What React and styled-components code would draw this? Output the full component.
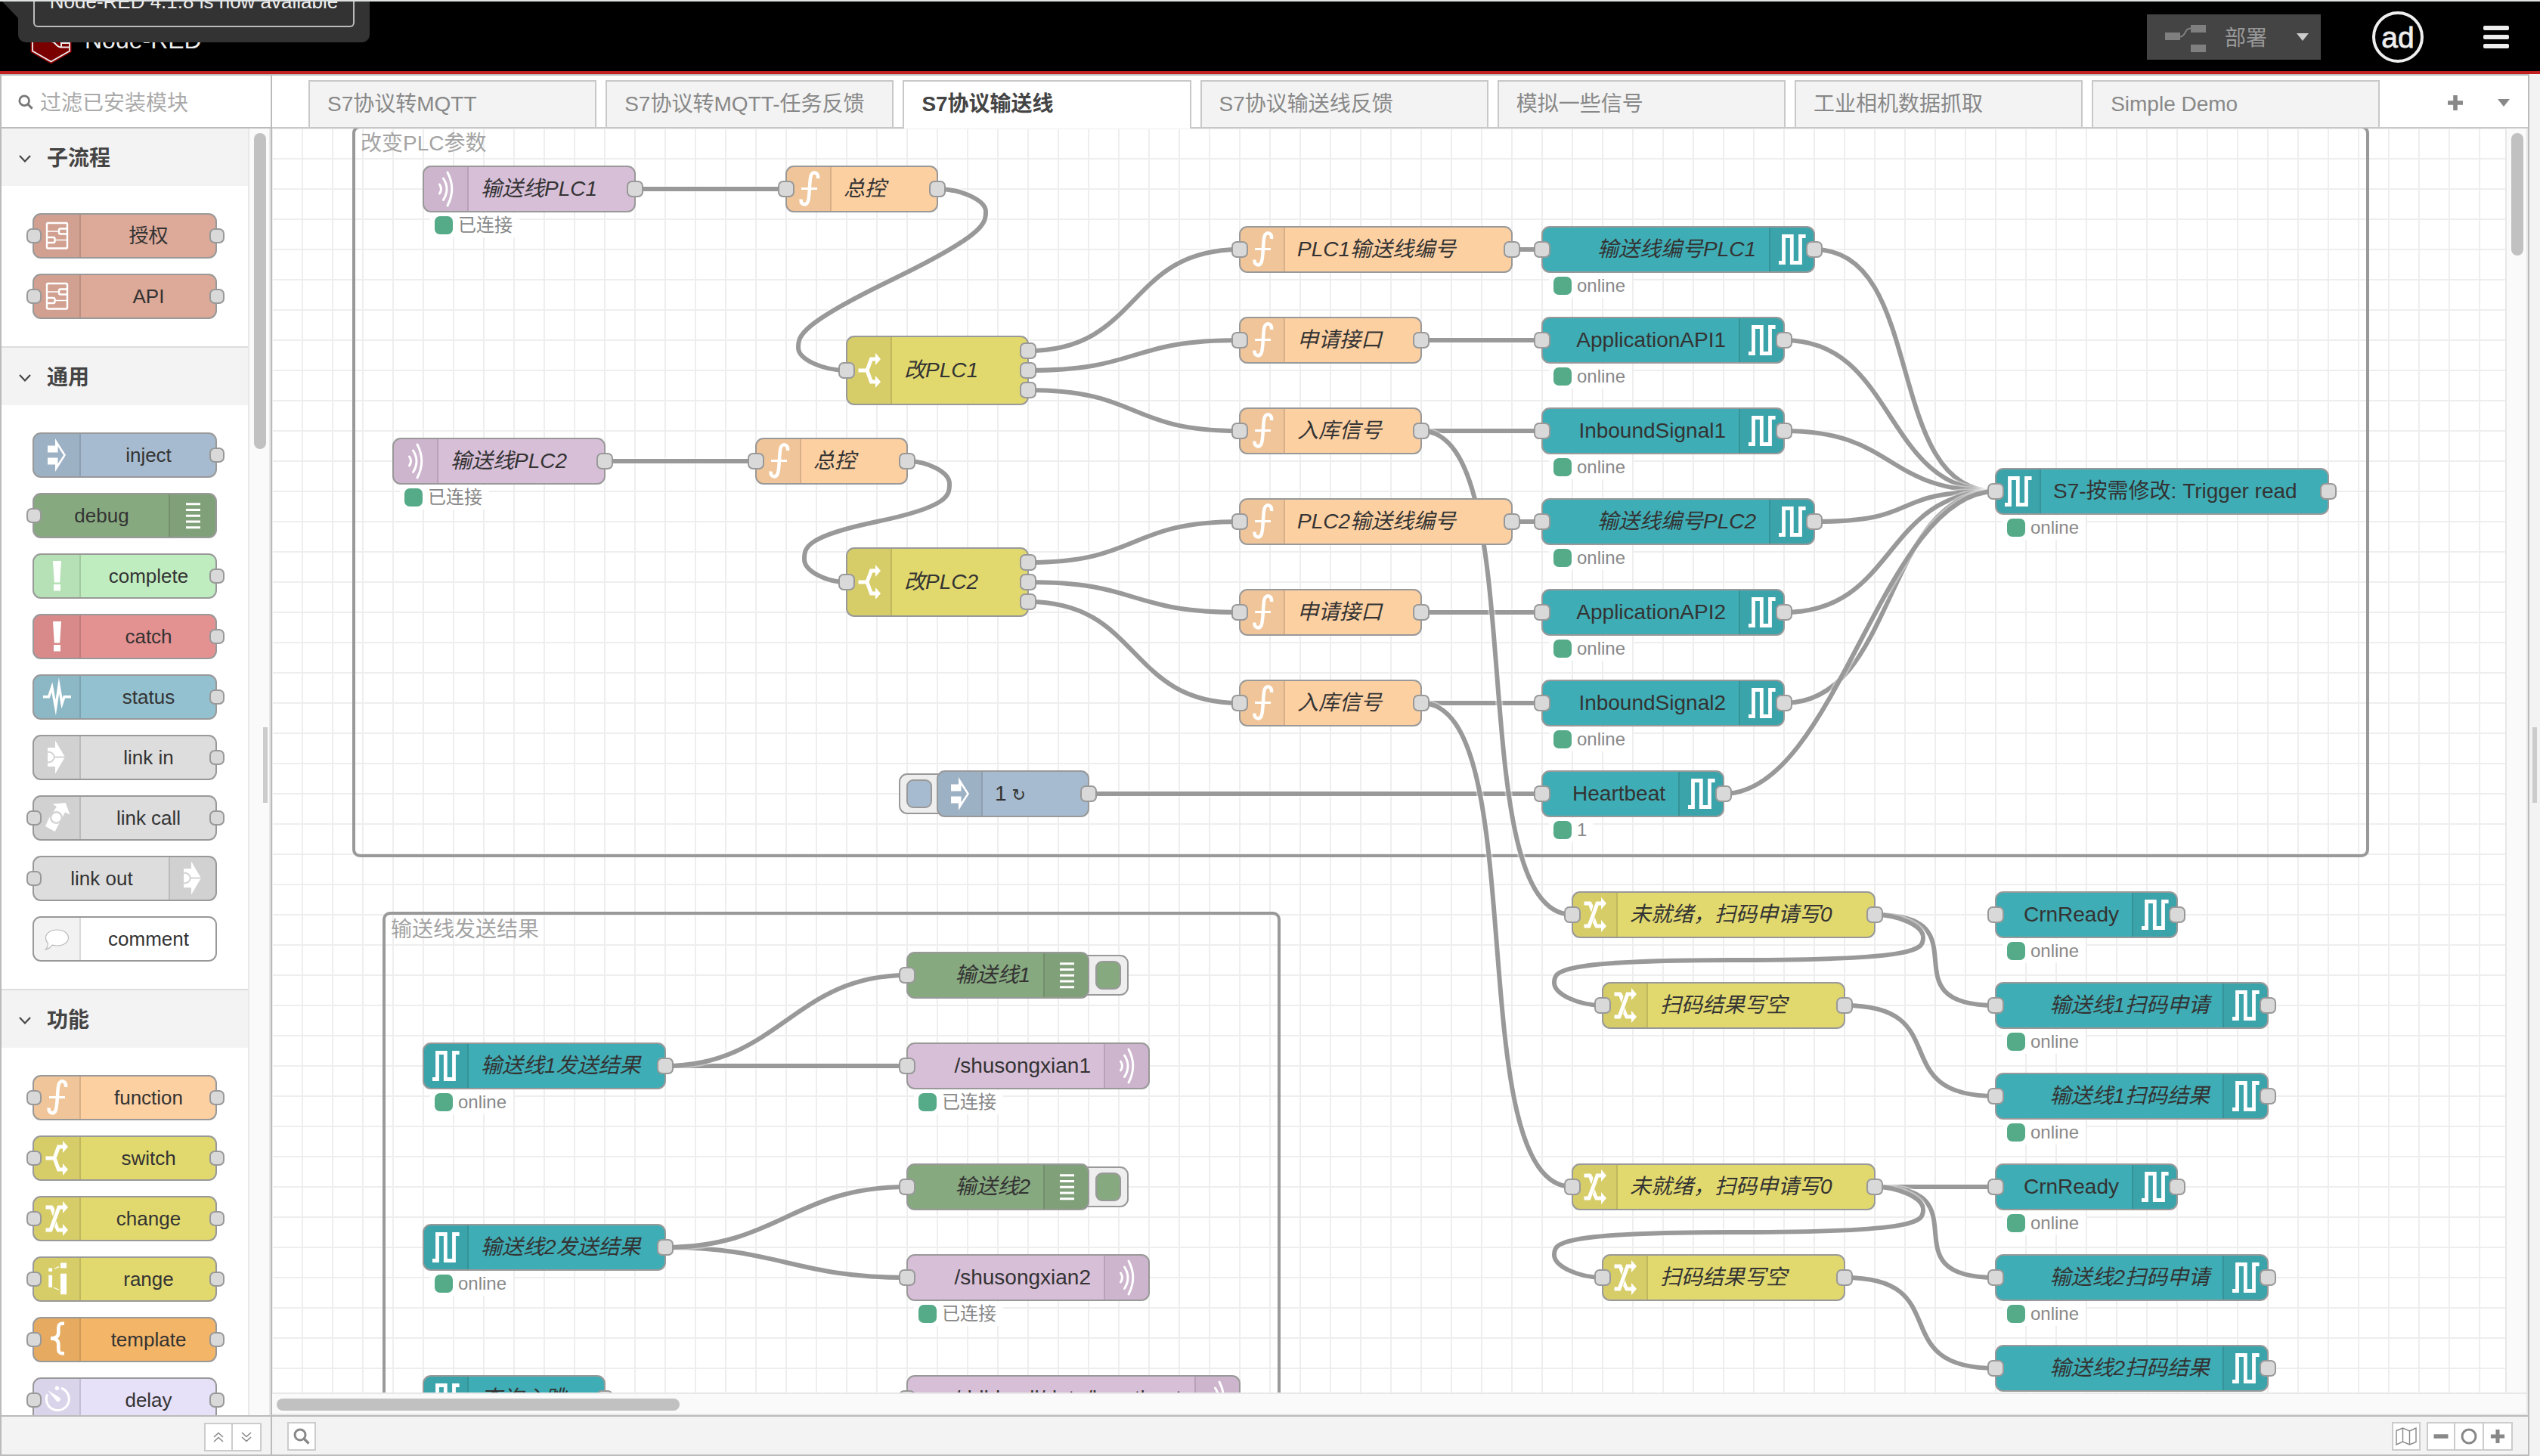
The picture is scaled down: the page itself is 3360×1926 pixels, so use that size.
import React from 'react';
import styled, { createGlobalStyle, css } from 'styled-components';

const GlobalStyle = createGlobalStyle`
  *, *::before, *::after { box-sizing: border-box; }
  html, body { margin: 0; padding: 0; background: #f3f3f3; overflow: hidden; }
  body {
    font-family: "Liberation Sans", "Noto Sans CJK SC", "DejaVu Sans", sans-serif;
    font-size: 28px;
    color: #333;
  }
`;

/* ---------- icons, all on a 40x60 canvas ---------- */

const ARROWHEADS = 'M28 7 L35 15 L28 23 Z M28 37 L35 45 L28 53 Z';

const ICONS = {
  mqtt: (
    <g fill="none" stroke="#fff" strokeWidth="3" strokeLinecap="round">
      <path d="M22 8 Q33.5 30 22 52" />
      <path d="M16.5 16 Q25.5 30 16.5 44.5" />
      <path d="M11.5 24 Q15.5 30 11.5 36" />
    </g>
  ),
  fn: (
    <g fill="none" stroke="#fff" strokeWidth="4.5">
      <path d="M32 16 C33 7.5 25 6 22.8 12 C20.5 18 21.5 40 18.6 47 C16 52.5 9 51 9.6 43.5" />
      <path d="M10 29.5 H31" strokeWidth="3" />
    </g>
  ),
  switch: (
    <g>
      <path d="M5.5 30 H17 M28 15 H22.5 L17 30 L22.5 45 H28" fill="none" stroke="#fff" strokeWidth="5" />
      <path d={ARROWHEADS} fill="#fff" />
    </g>
  ),
  change: (
    <g fill="#fff">
      <path d="M5.5 45 H12 L23 15 H28" fill="none" stroke="#fff" strokeWidth="5" />
      <path d="M5.5 12.5 H14.5 L17.5 18 L15 27 L11.5 17.5 H5.5 Z" />
      <path d="M19.5 33 L23 42.5 H28 V47.5 H20.5 L17 41 Z" />
      <path d={ARROWHEADS} />
    </g>
  ),
  range: (
    <g fill="#fff">
      <path d="M9.3 15.5 h4.8 v4.5 h-4.8z M9.3 24.7 h4.8 v16.3 h-4.8z M25 8.6 h8 v6.8 h-8z M25 22.7 h8 v27.5 h-8z" />
      <path d="M17 16.2 L23 13.6 M16 41.3 L23 44.2" stroke="#fff" strokeWidth="1.2" />
    </g>
  ),
  template: (
    <path
      d="M30 8.8 H27.5 C23 8.8 22.3 11 22.3 15 V21 C22.3 26 19 28.5 12 28.5 C19 28.5 22.3 31 22.3 36 V42 C22.3 46 23 48.2 27.5 48.2 H30"
      fill="none"
      stroke="#fff"
      strokeWidth="4.6"
    />
  ),
  delay: (
    <g>
      <path d="M26 14.3 A15 15 0 1 1 7.6 22.5" fill="none" stroke="#fff" strokeWidth="3" />
      <circle cx="20.5" cy="14.3" r="2.7" fill="#fff" />
      <path d="M8 17 L23.5 26.5 A2.6 2.6 0 0 1 20 31.5 Z" fill="#fff" />
    </g>
  ),
  inject: (
    <path
      fill="#fff"
      d="M18 8 L32 30 L18 52 V42.5 H8 V33.5 H21.5 V41.5 L29 30 L21.5 18.5 V26.5 H8 V17.5 H18 Z"
    />
  ),
  debug: (
    <path d="M11 14.8 H30 M11 22.4 H30 M11 30.2 H30 M11 38 H30 M11 45.8 H30" stroke="#fff" strokeWidth="3" fill="none" />
  ),
  bang: <path d="M15 10 H26 L24.2 38.5 H16.8 Z M16 41 H25 V49.5 H16 Z" fill="#fff" />,
  status: (
    <path
      d="M2 29.7 H9.5 L13.8 17 L18.7 44 L23 15 L27 38.5 L30 29.7 H39"
      fill="none"
      stroke="#fff"
      strokeWidth="3.4"
      strokeMiterlimit="10"
    />
  ),
  link: (
    <g>
      <path d="M8 17 H18 V7.5 L31 29.5 L18 51.5 V42 H8 Z" fill="#fff" />
      <path d="M8 22.5 C13 22.5 16 25 17 29.5 C16 34 13 36.5 8 36.5 M17 29.5 H31" fill="none" stroke="#d3d3d3" strokeWidth="2" />
    </g>
  ),
  linkCall: (
    <g>
      <path d="M14.5 11.5 L31.7 10 L37.5 25.5 L31 22.5 L17.7 48 L5 41 L10 30 L20 15 Z" fill="#fff" />
      <circle cx="19.5" cy="29.5" r="7.3" fill="#fff" stroke="#d3d3d3" strokeWidth="2.4" />
    </g>
  ),
  comment: (
    <path
      d="M20.5 18 C29 18 35.5 22.5 35.5 28.5 C35.5 34.5 29 39 20.5 39 C18 39 16 38.7 14 38.2 C12 41 9 43.5 5.3 44.2 C7.5 42 8.5 39 8.5 35.8 C6.5 33.8 5.5 31.3 5.5 28.5 C5.5 22.5 12 18 20.5 18 Z"
      fill="#fff"
      stroke="#bbb"
      strokeWidth="1.2"
    />
  ),
  subflow: (
    <g fill="none" stroke="#fff" strokeWidth="2.4">
      <rect x="7" y="13" width="27" height="33.5" rx="1.5" />
      <path d="M34 20.5 H25 a2 2 0 0 0 -2 2 v3 a2 2 0 0 0 2 2 H34 M7 32 H15.5 a2 2 0 0 1 2 2 v3 a2 2 0 0 1 -2 2 H7" />
      <path d="M7 24 H23 M17.5 35.5 H34" strokeWidth="1.6" />
    </g>
  ),
  s7: (
    <path d="M2 47.5 H8.5 V12.5 H19.3 V47.5 H30.5 V12.5 H37.6" fill="none" stroke="#fff" strokeWidth="4.8" />
  ),
};

const IconSvg = styled.svg`
  display: block;
  width: 40px;
  height: 60px;
  flex: none;
`;

const Icon = ({ name }) => <IconSvg viewBox="0 0 40 60">{ICONS[name]}</IconSvg>;

/* ---------- node building blocks ---------- */

const COLORS = {
  mqtt: '#d8bfd8',
  fn: '#fdd0a2',
  yellow: '#e2d96e',
  teal: '#3fadb5',
  inject: '#a6bbcf',
  debug: '#87a980',
  link: '#dddddd',
  subflow: '#dda998',
};

const NodeBody = styled.div`
  display: flex;
  flex-direction: ${(p) => (p.$right ? 'row-reverse' : 'row')};
  height: 100%;
  border: 2px solid #999;
  border-radius: 11px;
  background: ${(p) => p.$color};
  overflow: hidden;
`;

const IconPane = styled.div`
  display: flex;
  align-items: center;
  justify-content: center;
  flex: none;
  width: ${(p) => p.$width || 59}px;
  background: rgba(0, 0, 0, 0.05);
  ${(p) => (p.$right ? 'border-left' : 'border-right')}: 2px solid rgba(0, 0, 0, 0.1);
`;

const Port = styled.span`
  position: absolute;
  top: ${(p) => p.$y - 11}px;
  ${(p) => (p.$side === 'in' ? 'left: -10px;' : 'right: -10px;')}
  width: 22px;
  height: 22px;
  border: 2px solid #999;
  border-radius: 7px;
  background: #d9d9d9;
`;

const PalettePort = styled(Port)`
  top: 20px;
  ${(p) => (p.$side === 'in' ? 'left: -8px;' : 'right: -10px;')}
  width: 20px;
  height: 20px;
`;

/* ---------- header ---------- */

const Header = styled.header`
  display: flex;
  align-items: center;
  justify-content: space-between;
  height: 98px;
  padding: 2px 41px 0 40px;
  background: #000;
  border-top: 2px solid #dfe3e3;
  border-bottom: 4px solid #c02020;
`;

const Brand = styled.div`
  display: flex;
  align-items: center;
  gap: 17px;
  padding-top: 7px;
  color: #eee;
  font-size: 32px;
  line-height: 40px;
`;

const LogoSvg = styled.svg`
  width: 55px;
  height: 64px;
`;

const HeaderTools = styled.div`
  display: flex;
  align-items: center;
  height: 100%;
`;

const Deploy = styled.button`
  display: flex;
  align-items: center;
  width: 230px;
  height: 60px;
  margin: 0;
  padding: 0 16px 0 24px;
  border: 0;
  background: #444;
  color: #999;
  font: inherit;
`;

const DeployIcon = styled.svg`
  width: 54px;
  height: 36px;
  margin: 3px 25px 0 0;
`;

const Caret = styled.span`
  width: 0;
  height: 0;
  border: 8px solid transparent;
  border-top: 10px solid ${(p) => p.$color};
  border-bottom: 0;
`;

const DeployLabel = styled.span`
  flex: 1;
  padding-top: 3px;
  text-align: left;
  line-height: 40px;
`;

const Avatar = styled.div`
  display: flex;
  align-items: center;
  justify-content: center;
  width: 68px;
  height: 68px;
  margin: 0 79px 0 68px;
  padding-top: 2px;
  border: 4px solid #eee;
  border-radius: 50%;
  color: #eee;
  font-size: 39px;
  line-height: 56px;
  -webkit-text-stroke: 0.8px #eee;
`;

const Burger = styled.div`
  display: flex;
  flex-direction: column;
  gap: 6px;
  width: 34px;

  span {
    height: 6px;
    border-radius: 2px;
    background: #eee;
  }
`;

/* hangs over the header from above the window edge */
const Notice = styled.div`
  position: absolute;
  top: 2px;
  left: 24px;
  width: 465px;
  height: 54px;
  padding: 0 20px 20px;
  border-radius: 0 0 10px 10px;
  background: #333;
`;

const NoticeArrow = styled.svg`
  position: absolute;
  top: 2px;
  left: 0;
  width: 24px;
  height: 24px;
`;

const NoticeBox = styled.div`
  display: flex;
  justify-content: center;
  align-items: flex-end;
  height: 34px;
  padding-bottom: 17px;
  border: 2px solid #bbb;
  border-top: 0;
  border-radius: 0 0 6px 6px;
  overflow: hidden;
  color: #eee;
  font-size: 26px;
  line-height: 30px;
  white-space: nowrap;
`;

/* ---------- page frame ---------- */

const Page = styled.div`
  width: 3360px;
  height: 1926px;
  display: flex;
  flex-direction: column;
  background: #f3f3f3;
`;

const Main = styled.div`
  display: flex;
  flex: 1;
  min-height: 0;
`;

const Panel = styled.section`
  display: flex;
  flex-direction: column;
  border: 2px solid #bbb;
  background: #fff;
`;

const Palette = styled(Panel)`
  position: relative;
  width: 360px;
`;

const Workspace = styled(Panel)`
  width: 2986px;
  border-left: 0;
`;

const Sidebar = styled.aside`
  position: relative;
  flex: 1;
  background: #f3f3f3;
`;

const DragHandle = styled.i`
  position: absolute;
  top: ${(p) => p.$top}px;
  left: ${(p) => p.$left}px;
  width: 6px;
  height: 100px;
  background: #ccc;
`;

/* ---------- palette ---------- */

const Search = styled.div`
  display: flex;
  align-items: center;
  gap: 9px;
  height: 70px;
  padding: 2px 22px 0;
  border-bottom: 2px solid #bbb;
  color: #aaa;
  line-height: 40px;
`;

const SearchHint = styled.span`
  padding-top: 3px;
`;

const PaletteBody = styled.div`
  display: flex;
  flex: 1;
  min-height: 0;
`;

const Categories = styled.div`
  width: 326px;
  overflow: hidden;
`;

const PaletteScroll = styled.div`
  width: 30px;
  padding: 6px 4px 0 6px;
  border: solid #e8e8e8;
  border-width: 0 2px;
  background: #fafafa;
`;

const Thumb = styled.div`
  width: ${(p) => p.$w}px;
  height: ${(p) => p.$h}px;
  border-radius: 8px;
  background: #c1c1c1;
`;

const Category = styled.div`
  border-bottom: 2px solid #ddd;
`;

const CategoryHead = styled.div`
  display: flex;
  align-items: center;
  gap: 20px;
  height: 76px;
  padding: 3px 0 0 22px;
  background: #f3f3f3;
  color: #444;
  font-weight: 700;
  line-height: 40px;
`;

const CategoryNodes = styled.div`
  display: flex;
  flex-direction: column;
  gap: 20px;
  padding: 36px 0 36px 41px;
`;

const PaletteNode = styled.div`
  position: relative;
  width: 244px;
  height: 60px;
`;

const PaletteLabel = styled.span`
  flex: 1;
  display: flex;
  align-items: center;
  justify-content: center;
  font-size: 26px;
  line-height: 36px;
  padding-left: 1px;
  color: #333;
`;

const Footer = styled.footer`
  display: flex;
  align-items: center;
  justify-content: ${(p) => p.$justify || 'flex-end'};
  height: 52px;
  padding: ${(p) => p.$top}px ${(p) => p.$pad}px 0;
  border-top: 2px solid #bbb;
  background: #f3f3f3;
`;

const ButtonGroup = styled.div`
  display: flex;
  ${(p) => p.$ml && css`margin-left: ${p.$ml}px;`}
`;

const FooterButton = styled.button`
  display: flex;
  align-items: center;
  justify-content: center;
  width: 38px;
  height: 38px;
  margin: 0;
  padding: 0;
  border: 2px solid #ccc;
  background: #fff;

  & + & {
    border-left: 0;
  }
`;

const Glyph = styled.svg`
  display: block;
  flex: none;
  width: ${(p) => p.$w}px;
  height: ${(p) => p.$h || p.$w}px;
  fill: none;
  stroke: ${(p) => p.$color || '#888'};
`;

/* ---------- tabs ---------- */

const TabBar = styled.nav`
  display: flex;
  justify-content: space-between;
  height: 70px;
  padding: 6px 24px 0 48px;
  background: linear-gradient(#c8c8c8, #c8c8c8) 0 100% / 100% 2px no-repeat #fff;
`;

const TabList = styled.div`
  display: flex;
  gap: 12px;
`;

const Tab = styled.div`
  display: flex;
  align-items: center;
  width: 381.2px;
  height: ${(p) => (p.$active ? 64 : 62)}px;
  padding: 0 0 ${(p) => (p.$active ? 3 : 1)}px 23px;
  border: 2px solid #c8c8c8;
  border-bottom: 0;
  background: ${(p) => (p.$active ? '#fff' : '#f3f3f3')};
  color: ${(p) => (p.$active ? '#444' : '#888')};
  font-weight: ${(p) => (p.$active ? 700 : 400)};
  line-height: 40px;
  white-space: nowrap;
`;

const TabTools = styled.div`
  display: flex;
  align-items: center;
  gap: 45px;
  padding-bottom: 5px;
`;

/* ---------- canvas ---------- */

const CanvasRow = styled.div`
  display: flex;
  height: 1672px;
`;

const Canvas = styled.div`
  position: relative;
  width: 2954px;
  overflow: hidden;
  background-color: #fff;
  background-image: linear-gradient(#eee 2px, transparent 2px), linear-gradient(90deg, #eee 2px, transparent 2px);
  background-size: 40px 40px;
  background-position: -1px -1px;
`;

const VScroll = styled.div`
  width: 30px;
  padding: 6px 0 0 6px;
  border: solid #e8e8e8;
  border-width: 0 2px;
  background: #fafafa;
`;

const HScroll = styled.div`
  height: 30px;
  padding: 6px;
  border: solid #e8e8e8;
  border-width: 2px 2px 2px 0;
  background: #fafafa;
`;

const Group = styled.div`
  position: absolute;
  left: ${(p) => p.$x - 362}px;
  top: ${(p) => p.$y - 172}px;
  width: ${(p) => p.$w + 4}px;
  height: ${(p) => p.$h + 4}px;
  padding: 2px 7px;
  border: 4px solid #999;
  border-radius: 10px;
  color: #a4a4a4;
  line-height: 36px;
`;

const WireLayer = styled.svg`
  position: absolute;
  left: 0;
  top: 0;
  width: 2954px;
  height: 1672px;
  fill: none;
`;

const FlowNodeBox = styled.div`
  position: absolute;
  left: ${(p) => p.$x - 361}px;
  top: ${(p) => p.$cy - p.$h / 2 - 171}px;
  width: ${(p) => p.$w + 2}px;
  height: ${(p) => p.$h + 2}px;
`;

const FlowBody = styled(NodeBody)`
  position: relative;
`;

const FlowLabel = styled.span`
  flex: 1;
  display: flex;
  align-items: center;
  justify-content: ${(p) => (p.$right ? 'flex-end' : 'flex-start')};
  padding: ${(p) => (p.$right ? '0 17px 0 0' : '0 0 0 16px')};
  font-style: ${(p) => (p.$italic ? 'italic' : 'normal')};
  line-height: 36px;
  white-space: pre;
  color: #333;
`;

const RepeatMark = styled.span`
  padding: 3px 0 0 7px;
  font-size: 22px;
  line-height: 30px;
`;

const Status = styled.div`
  position: absolute;
  left: 10px;
  top: 63px;
  display: flex;
  align-items: center;
  gap: 7px;
  height: 32px;
  padding: 0 9px 0 6px;
  border-radius: 4px;
  background: rgba(255, 255, 255, 0.9);
  color: #888;
  font-size: 24px;
  line-height: 30px;
  white-space: nowrap;

  &::before {
    content: '';
    width: 24px;
    height: 24px;
    border-radius: 7px;
    background: #5a8;
  }
`;

const NodeButton = styled.span`
  position: absolute;
  top: 4px;
  ${(p) => (p.$side === 'left' ? 'left: -50px;' : 'right: -52px;')}
  display: flex;
  align-items: center;
  justify-content: ${(p) => (p.$side === 'left' ? 'flex-start' : 'flex-end')};
  width: 66px;
  height: 54px;
  padding: 0 8px;
  border: 2px solid #999;
  border-radius: 11px;
  background: #eee;

  i {
    width: 34px;
    height: 38px;
    border: 2px solid #999;
    border-radius: 9px;
    background: ${(p) => p.$color};
  }
`;

/* ---------- flow data ---------- */

const n = (kind, x, w, cy, label, opts = {}) => ({ kind, x, w, cy, label, ...opts });

const KINDS = {
  mqttIn: { color: COLORS.mqtt, icon: 'mqtt', outputs: 1 },
  mqttOut: { color: COLORS.mqtt, icon: 'mqtt', right: true, input: true, outputs: 0 },
  fn: { color: COLORS.fn, icon: 'fn', input: true, outputs: 1, italic: true },
  switch: { color: COLORS.yellow, icon: 'switch', input: true, outputs: 3, italic: true, h: 90 },
  change: { color: COLORS.yellow, icon: 'change', input: true, outputs: 1, italic: true },
  s7in: { color: COLORS.teal, icon: 's7', outputs: 1, italic: true },
  s7out: { color: COLORS.teal, icon: 's7', right: true, input: true, outputs: 1 },
  s7ctl: { color: COLORS.teal, icon: 's7', input: true, outputs: 1 },
  inject: { color: COLORS.inject, icon: 'inject', outputs: 1, button: 'left' },
  debug: { color: COLORS.debug, icon: 'debug', right: true, input: true, outputs: 0, italic: true, button: 'right' },
};

const on = { status: 'online' };
const it = { italic: true };

const NODES = [
  n('mqttIn', 560, 280, 250, '输送线PLC1', { ...it, status: '已连接' }),
  n('fn', 1040, 200, 250, '总控'),
  n('switch', 1120, 240, 490, '改PLC1'),
  n('mqttIn', 520, 280, 610, '输送线PLC2', { ...it, status: '已连接' }),
  n('fn', 1000, 200, 610, '总控'),
  n('switch', 1120, 240, 770, '改PLC2'),
  n('fn', 1640, 360, 330, 'PLC1输送线编号'),
  n('fn', 1640, 240, 450, '申请接口'),
  n('fn', 1640, 240, 570, '入库信号'),
  n('fn', 1640, 360, 690, 'PLC2输送线编号'),
  n('fn', 1640, 240, 810, '申请接口'),
  n('fn', 1640, 240, 930, '入库信号'),
  n('s7out', 2040, 360, 330, '输送线编号PLC1', { ...it, ...on }),
  n('s7out', 2040, 320, 450, 'ApplicationAPI1', on),
  n('s7out', 2040, 320, 570, 'InboundSignal1', on),
  n('s7out', 2040, 360, 690, '输送线编号PLC2', { ...it, ...on }),
  n('s7out', 2040, 320, 810, 'ApplicationAPI2', on),
  n('s7out', 2040, 320, 930, 'InboundSignal2', on),
  n('s7out', 2040, 240, 1050, 'Heartbeat', { status: '1' }),
  n('s7ctl', 2640, 440, 650, 'S7-按需修改: Trigger read', on),
  n('inject', 1240, 200, 1050, '1', { repeat: true }),
  n('s7in', 560, 320, 1410, '输送线1发送结果', on),
  n('s7in', 560, 320, 1650, '输送线2发送结果', on),
  n('s7in', 560, 240, 1850, '查询心跳'),
  n('debug', 1200, 240, 1290, '输送线1'),
  n('mqttOut', 1200, 320, 1410, '/shusongxian1', { status: '已连接' }),
  n('debug', 1200, 240, 1570, '输送线2'),
  n('mqttOut', 1200, 320, 1690, '/shusongxian2', { status: '已连接' }),
  n('mqttOut', 1200, 440, 1850, '/ddhbcall/data/heartbeat'),
  n('change', 2080, 400, 1210, '未就绪，扫码申请写0'),
  n('change', 2120, 320, 1330, '扫码结果写空'),
  n('s7out', 2640, 240, 1210, 'CrnReady', on),
  n('s7out', 2640, 360, 1330, '输送线1扫码申请', { ...it, ...on }),
  n('s7out', 2640, 360, 1450, '输送线1扫码结果', { ...it, ...on }),
  n('change', 2080, 400, 1570, '未就绪，扫码申请写0'),
  n('change', 2120, 320, 1690, '扫码结果写空'),
  n('s7out', 2640, 240, 1570, 'CrnReady', on),
  n('s7out', 2640, 360, 1690, '输送线2扫码申请', { ...it, ...on }),
  n('s7out', 2640, 360, 1810, '输送线2扫码结果', { ...it }),
];

const WIRES = [
  [840, 250, 1040, 250],
  [1240, 250, 1120, 490],
  [800, 610, 1000, 610],
  [1200, 610, 1120, 770],
  [1360, 464, 1640, 330],
  [1360, 490, 1640, 450],
  [1360, 516, 1640, 570],
  [1360, 744, 1640, 690],
  [1360, 770, 1640, 810],
  [1360, 796, 1640, 930],
  [2000, 330, 2040, 330],
  [1880, 450, 2040, 450],
  [1880, 570, 2040, 570],
  [2000, 690, 2040, 690],
  [1880, 810, 2040, 810],
  [1880, 930, 2040, 930],
  [1440, 1050, 2040, 1050],
  [1880, 570, 2080, 1210],
  [1880, 930, 2080, 1570],
  [2400, 330, 2640, 650],
  [2360, 450, 2640, 650],
  [2360, 570, 2640, 650],
  [2400, 690, 2640, 650],
  [2360, 810, 2640, 650],
  [2360, 930, 2640, 650],
  [2280, 1050, 2640, 650],
  [880, 1410, 1200, 1410],
  [880, 1410, 1200, 1290],
  [880, 1650, 1200, 1690],
  [880, 1650, 1200, 1570],
  [2480, 1210, 2640, 1330],
  [2480, 1210, 2120, 1330],
  [2440, 1330, 2640, 1450],
  [2480, 1570, 2640, 1570],
  [2480, 1570, 2640, 1690],
  [2480, 1570, 2120, 1690],
  [2440, 1690, 2640, 1810],
];

const NODE_WIDTH = 200;
const CURVE_HEIGHT = 30;

/* forward wires are a single bezier, backward wires loop through four */
function wirePath([ax, ay, bx, by]) {
  const x0 = ax - 360;
  const y0 = ay - 170;
  const x1 = bx - 360;
  const y1 = by - 170;
  const dx = x1 - x0;
  const dy = y1 - y0;
  if (dx > 0) {
    const delta = Math.hypot(dx, dy);
    const scale = delta < NODE_WIDTH ? 0.75 - 0.75 * ((NODE_WIDTH - delta) / NODE_WIDTH) : 0.75;
    return `M${x0} ${y0} C${x0 + NODE_WIDTH * scale} ${y0} ${x1 - NODE_WIDTH * scale} ${y1} ${x1} ${y1}`;
  }
  const near = Math.min(Math.abs(dx), Math.abs(dy));
  const scale = 0.4 - 0.2 * Math.max(0, (NODE_WIDTH - near) / NODE_WIDTH);
  const midX = x1 - dx / 2;
  const midY = y1 - dy / 2;
  const yq = (y1 + midY) / 2;
  const topX = x0 + NODE_WIDTH * scale;
  const topY = Math.min(yq - dy / 2, y0 + CURVE_HEIGHT);
  const botX = x1 - NODE_WIDTH * scale;
  const botY = Math.max(yq, y1 - CURVE_HEIGHT);
  const cx = (x0 + topX) / 2;
  const cp = [
    [cx, y0],
    [topX, Math.max(y0, topY - CURVE_HEIGHT)],
    [cx, Math.min(midY, topY + CURVE_HEIGHT)],
    [botX, Math.max(midY, botY - CURVE_HEIGHT)],
    [(x1 + botX) / 2, y1],
  ];
  if (cp[2][1] === topY + CURVE_HEIGHT) {
    if (Math.abs(dy) < CURVE_HEIGHT * 10) {
      cp[1][1] = topY - CURVE_HEIGHT / 2;
      cp[3][1] = botY - CURVE_HEIGHT / 2;
    }
    cp[2][0] = topX;
  }
  return `M${x0} ${y0} C${cp[0]} ${cp[1]} ${topX} ${topY} S${cp[2]} ${midX} ${midY} S${cp[3]} ${botX} ${botY} S${cp[4]} ${x1} ${y1}`;
}

const Wire = ({ ends }) => {
  const d = wirePath(ends);
  return (
    <g>
      <path d={d} stroke="#fff" strokeOpacity="0.4" strokeWidth="10" />
      <path d={d} stroke="#999" strokeWidth="6" />
    </g>
  );
};

const FlowNode = ({ node }) => {
  const kind = KINDS[node.kind];
  const h = kind.h || 60;
  const mid = h / 2 + 1;
  const italic = node.italic ?? kind.italic;
  const outs = Array.from({ length: kind.outputs }, (_, i) => mid + (i - (kind.outputs - 1) / 2) * 26);
  return (
    <FlowNodeBox $x={node.x} $w={node.w} $cy={node.cy} $h={h}>
      {kind.button && (
        <NodeButton $side={kind.button} $color={kind.color}>
          <i />
        </NodeButton>
      )}
      <FlowBody $color={kind.color} $right={kind.right}>
        <IconPane $right={kind.right}>
          <Icon name={kind.icon} />
        </IconPane>
        <FlowLabel $right={kind.right} $italic={italic}>
          {node.label}
          {node.repeat && <RepeatMark>↻</RepeatMark>}
        </FlowLabel>
      </FlowBody>
      {kind.input && <Port $side="in" $y={mid} />}
      {outs.map((y) => (
        <Port key={y} $side="out" $y={y} />
      ))}
      {node.status && <Status>{node.status}</Status>}
    </FlowNodeBox>
  );
};

const PALETTE = [
  {
    title: '子流程',
    items: [
      ['授权', COLORS.subflow, 'subflow', 'io'],
      ['API', COLORS.subflow, 'subflow', 'io'],
    ],
  },
  {
    title: '通用',
    items: [
      ['inject', COLORS.inject, 'inject', 'o'],
      ['debug', COLORS.debug, 'debug', 'i', true],
      ['complete', '#c0edc0', 'bang', 'o'],
      ['catch', '#e49191', 'bang', 'o'],
      ['status', '#94c1d0', 'status', 'o'],
      ['link in', COLORS.link, 'link', 'o'],
      ['link call', COLORS.link, 'linkCall', 'io'],
      ['link out', COLORS.link, 'link', 'i', true],
      ['comment', '#ffffff', 'comment', ''],
    ],
  },
  {
    title: '功能',
    items: [
      ['function', COLORS.fn, 'fn', 'io'],
      ['switch', COLORS.yellow, 'switch', 'io'],
      ['change', COLORS.yellow, 'change', 'io'],
      ['range', COLORS.yellow, 'range', 'io'],
      ['template', '#f3b567', 'template', 'io'],
      ['delay', '#e6e0f8', 'delay', 'io'],
    ],
  },
];

const TABS = ['S7协议转MQTT', 'S7协议转MQTT-任务反馈', 'S7协议输送线', 'S7协议输送线反馈', '模拟一些信号', '工业相机数据抓取', 'Simple Demo'];
const ACTIVE_TAB = 2;

const Chevron = () => (
  <Glyph $w={18} $h={12} $color="#444" viewBox="0 0 18 12">
    <path d="M2 2 L9 9.5 L16 2" strokeWidth="2.2" />
  </Glyph>
);

const SearchGlyph = ({ size, color }) => (
  <Glyph $w={size} $color={color} viewBox="0 0 22 22">
    <circle cx="9" cy="9" r="7" strokeWidth="3" />
    <path d="M14 14 L20.5 20.5" strokeWidth="3.4" />
  </Glyph>
);

const PlusGlyph = ({ size }) => (
  <Glyph $w={size} viewBox="0 0 22 22">
    <path d="M11 1 V21 M1 11 H21" strokeWidth="5.6" strokeLinejoin="round" />
  </Glyph>
);

export default function App() {
  return (
    <Page>
      <GlobalStyle />
      <Header>
        <Brand>
          <LogoSvg viewBox="0 0 55 64">
            <path d="M27.5 1 L54.5 14 V48 L27.5 63.5 L0.5 48 V14 Z" fill="#8f0000" />
            <path d="M27.5 4 L52 16 V46.5 L27.5 60.5 L3 46.5 V16 Z" fill="#7a0000" stroke="#eee" strokeWidth="1.8" />
            <path d="M28 34 C34 34 34 41.5 41 41.5 M52 36 H41 V41.5 H52" fill="none" stroke="#eee" strokeWidth="2" />
          </LogoSvg>
          Node-RED
        </Brand>
        <HeaderTools>
          <Deploy>
            <DeployIcon viewBox="0 0 54 36" fill="#7f7f7f">
              <path d="M0 10 h20 v10 H0z M34 0 h20 v10 H34z M34 26 h20 v10 H34z" />
              <path d="M20 15.5 C28 15.5 25 4.5 34 4.5" fill="none" stroke="#7f7f7f" strokeWidth="2" />
            </DeployIcon>
            <DeployLabel>部署</DeployLabel>
            <Caret $color="#ccc" />
          </Deploy>
          <Avatar>ad</Avatar>
          <Burger>
            <span />
            <span />
            <span />
          </Burger>
        </HeaderTools>
      </Header>
      <NoticeArrow viewBox="0 0 24 24">
        <path d="M3 0 H24 V22 Z" fill="#333" />
      </NoticeArrow>
      <Notice>
        <NoticeBox>Node-RED 4.1.8 is now available</NoticeBox>
      </Notice>

      <Main>
        <Palette>
          <Search>
            <SearchGlyph size={20} color="#777" />
            <SearchHint>过滤已安装模块</SearchHint>
          </Search>
          <PaletteBody>
            <Categories>
              {PALETTE.map((cat) => (
                <Category key={cat.title}>
                  <CategoryHead>
                    <Chevron />
                    {cat.title}
                  </CategoryHead>
                  <CategoryNodes>
                    {cat.items.map(([label, color, icon, ports, right]) => (
                      <PaletteNode key={label}>
                        <NodeBody $color={color} $right={right}>
                          <IconPane $right={right} $width={62}>
                            <Icon name={icon} />
                          </IconPane>
                          <PaletteLabel>{label}</PaletteLabel>
                        </NodeBody>
                        {ports.includes('i') && <PalettePort $side="in" />}
                        {ports.includes('o') && <PalettePort $side="out" />}
                      </PaletteNode>
                    ))}
                  </CategoryNodes>
                </Category>
              ))}
            </Categories>
            <PaletteScroll>
              <Thumb $w={16} $h={418} />
            </PaletteScroll>
          </PaletteBody>
          <Footer $pad={12} $top={4}>
            <ButtonGroup>
              <FooterButton>
                <Glyph $w={14} $h={14} viewBox="0 0 14 14">
                  <path d="M1 7 L7 1.5 L13 7 M1 13 L7 7.5 L13 13" strokeWidth="1.6" />
                </Glyph>
              </FooterButton>
              <FooterButton>
                <Glyph $w={14} $h={14} viewBox="0 0 14 14">
                  <path d="M1 1 L7 6.5 L13 1 M1 7 L7 12.5 L13 7" strokeWidth="1.6" />
                </Glyph>
              </FooterButton>
            </ButtonGroup>
          </Footer>
          <DragHandle $top={862} $left={346} />
        </Palette>

        <Workspace>
          <TabBar>
            <TabList>
              {TABS.map((tab, i) => (
                <Tab key={tab} $active={i === ACTIVE_TAB}>
                  {tab}
                </Tab>
              ))}
            </TabList>
            <TabTools>
              <PlusGlyph size={22} />
              <Caret $color="#888" />
            </TabTools>
          </TabBar>
          <CanvasRow>
            <Canvas>
              <Group $x={468} $y={168} $w={2664} $h={964}>改变PLC参数</Group>
              <Group $x={508} $y={1208} $w={1184} $h={800}>输送线发送结果</Group>
              <WireLayer viewBox="0 0 2954 1672">
                {WIRES.map((w) => (
                  <Wire key={w.join()} ends={w} />
                ))}
              </WireLayer>
              {NODES.map((node) => (
                <FlowNode key={`${node.x}-${node.cy}`} node={node} />
              ))}
            </Canvas>
            <VScroll>
              <Thumb $w={16} $h={162} />
            </VScroll>
          </CanvasRow>
          <HScroll>
            <Thumb $w={533} $h={16} />
          </HScroll>
          <Footer $pad={20} $top={2} $justify="space-between">
            <FooterButton>
              <SearchGlyph size={22} />
            </FooterButton>
            <ButtonGroup>
              <FooterButton>
                <Glyph $w={28} $h={24} viewBox="0 0 28 24">
                  <path d="M1 4.5 L9.5 1 L18.5 5 L27 1 V19.5 L18.5 23 L9.5 19 L1 23 Z M9.5 1 V19 M18.5 5 V23" strokeWidth="1.4" />
                </Glyph>
              </FooterButton>
              <ButtonGroup $ml={8}>
                <FooterButton>
                  <Glyph $w={20} $h={6} viewBox="0 0 20 6">
                    <path d="M0.5 3 H19.5" strokeWidth="5.5" />
                  </Glyph>
                </FooterButton>
                <FooterButton>
                  <Glyph $w={22} viewBox="0 0 22 22">
                    <circle cx="11" cy="11" r="9" strokeWidth="3" />
                  </Glyph>
                </FooterButton>
                <FooterButton>
                  <PlusGlyph size={20} />
                </FooterButton>
              </ButtonGroup>
            </ButtonGroup>
          </Footer>
        </Workspace>
        <Sidebar>
          <DragHandle $top={864} $left={4} />
        </Sidebar>
      </Main>
    </Page>
  );
}
